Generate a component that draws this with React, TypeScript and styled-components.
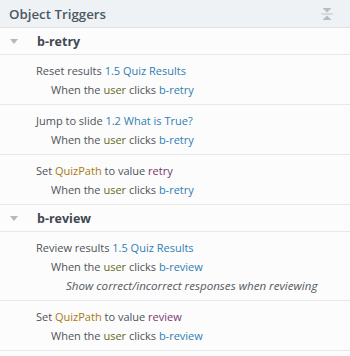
import React from "react";
import styled, { createGlobalStyle } from "styled-components";

const GlobalStyle = createGlobalStyle`
  html, body {
    margin: 0;
    padding: 0;
    background: #fcfcfc;
  }
  body {
    font-family: "Open Sans", "Noto Sans", sans-serif;
  }
`;

const Panel = styled.div`
  width: 350px;
  height: 356px;
  overflow: hidden;
  background: #fcfcfc;
`;

const Header = styled.div`
  display: flex;
  align-items: center;
  justify-content: space-between;
  height: 27px;
  padding: 0 17px 0 9px;
  background: #eef2f5;
  border-bottom: 1px solid #dfe3e6;
`;

const Title = styled.div`
  font-size: 13.3px;
  font-weight: 600;
  color: #4d5863;
`;

const GroupHeader = styled.div`
  display: flex;
  align-items: center;
  height: 26px;
  border-bottom: 1px solid #e6e8ea;
`;

const Caret = styled.span`
  width: 0;
  height: 0;
  margin: 0 19px 0 10px;
  border-left: 4px solid transparent;
  border-right: 4px solid transparent;
  border-top: 5px solid #b4b9bd;
`;

const GroupName = styled.span`
  font-size: 12.5px;
  font-weight: 700;
  color: #3e4852;
`;

const Item = styled.div`
  display: flex;
  flex-direction: column;
  padding: 6px 0 5px 36px;
  border-bottom: 1px solid #e6e8ea;
  font-size: 11px;
  line-height: 19px;
  color: #4f5358;
`;

const Line = styled.div<{ $level: number }>`
  padding-left: ${({ $level }) => $level * 15}px;
  white-space: nowrap;
`;

const Note = styled(Line)`
  font-size: 11.6px;
  font-style: italic;
  color: #55595e;
`;

type Tone = "ref" | "actor" | "var" | "value";

const toneColors: Record<Tone, string> = {
  ref: "#2f7db5",
  actor: "#5f6c1c",
  var: "#a57b13",
  value: "#7a356f",
};

const Tok = styled.span<{ $tone: Tone }>`
  color: ${({ $tone }) => toneColors[$tone]};
`;

const CollapseIcon = () => (
  <svg width="12" height="14" viewBox="0 0 12 14">
    <polygon points="1.5,1 10.5,1 6,5.5" fill="#b6bdc1" />
    <rect x="0.5" y="6.5" width="11" height="1" fill="#b6bdc1" />
    <polygon points="1.5,13 10.5,13 6,8.5" fill="#b6bdc1" />
  </svg>
);

const When = ({ target }: { target: string }) => (
  <Line $level={1}>
    When the <Tok $tone="actor">user</Tok> clicks <Tok $tone="ref">{target}</Tok>
  </Line>
);

export default function App() {
  return (
    <Panel>
      <GlobalStyle />
      <Header>
        <Title>Object Triggers</Title>
        <CollapseIcon />
      </Header>

      <GroupHeader>
        <Caret />
        <GroupName>b-retry</GroupName>
      </GroupHeader>
      <Item>
        <Line $level={0}>
          Reset results <Tok $tone="ref">1.5 Quiz Results</Tok>
        </Line>
        <When target="b-retry" />
      </Item>
      <Item>
        <Line $level={0}>
          Jump to slide <Tok $tone="ref">1.2 What is True?</Tok>
        </Line>
        <When target="b-retry" />
      </Item>
      <Item>
        <Line $level={0}>
          Set <Tok $tone="var">QuizPath</Tok> to value <Tok $tone="value">retry</Tok>
        </Line>
        <When target="b-retry" />
      </Item>

      <GroupHeader>
        <Caret />
        <GroupName>b-review</GroupName>
      </GroupHeader>
      <Item>
        <Line $level={0}>
          Review results <Tok $tone="ref">1.5 Quiz Results</Tok>
        </Line>
        <When target="b-review" />
        <Note $level={2}>Show correct/incorrect responses when reviewing</Note>
      </Item>
      <Item>
        <Line $level={0}>
          Set <Tok $tone="var">QuizPath</Tok> to value <Tok $tone="value">review</Tok>
        </Line>
        <When target="b-review" />
      </Item>
    </Panel>
  );
}
